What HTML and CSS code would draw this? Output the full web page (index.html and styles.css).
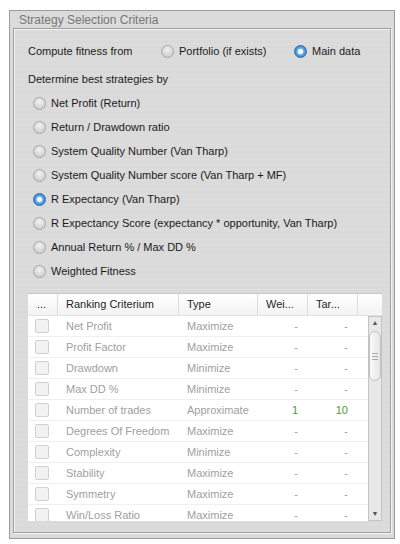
FILE: index.html
```html
<!DOCTYPE html>
<html lang="en">
<head>
    <meta charset="UTF-8">
    <title>Strategy Selection Criteria</title>
    <link rel="stylesheet" href="styles.css">
</head>
<body>

<div class="group">
    <div class="group-title">Strategy Selection Criteria</div>
    <div class="panel">
        <div class="row compute">
            <span class="compute-label">Compute fitness from</span>
            <label class="opt opt-portfolio"><span class="radio"></span>Portfolio (if exists)</label>
            <label class="opt opt-main"><span class="radio checked"></span>Main data</label>
        </div>
        <div class="row caption">Determine best strategies by</div>
        <div class="choices">
            <label class="row opt"><span class="radio"></span>Net Profit (Return)</label>
            <label class="row opt"><span class="radio"></span>Return / Drawdown ratio</label>
            <label class="row opt"><span class="radio"></span>System Quality Number (Van Tharp)</label>
            <label class="row opt"><span class="radio"></span>System Quality Number score (Van Tharp + MF)</label>
            <label class="row opt"><span class="radio checked"></span>R Expectancy (Van Tharp)</label>
            <label class="row opt"><span class="radio"></span>R Expectancy Score (expectancy * opportunity, Van Tharp)</label>
            <label class="row opt"><span class="radio"></span>Annual Return % / Max DD %</label>
            <label class="row opt"><span class="radio"></span>Weighted Fitness</label>
        </div>

        <div class="grid">
            <div class="grid-head">
                <div class="c c-chk">...</div>
                <div class="c c-name">Ranking Criterium</div>
                <div class="c c-type">Type</div>
                <div class="c c-w">Wei...</div>
                <div class="c c-t">Tar...</div>
                <div class="c c-pad"></div>
            </div>
            <div class="grid-body">
                <div class="rows">
                    <div class="grow"><div class="c c-chk"><span class="box"></span></div><div class="c c-name">Net Profit</div><div class="c c-type">Maximize</div><div class="c c-w">-</div><div class="c c-t">-</div></div>
                    <div class="grow"><div class="c c-chk"><span class="box"></span></div><div class="c c-name">Profit Factor</div><div class="c c-type">Maximize</div><div class="c c-w">-</div><div class="c c-t">-</div></div>
                    <div class="grow"><div class="c c-chk"><span class="box"></span></div><div class="c c-name">Drawdown</div><div class="c c-type">Minimize</div><div class="c c-w">-</div><div class="c c-t">-</div></div>
                    <div class="grow"><div class="c c-chk"><span class="box"></span></div><div class="c c-name">Max DD %</div><div class="c c-type">Minimize</div><div class="c c-w">-</div><div class="c c-t">-</div></div>
                    <div class="grow"><div class="c c-chk"><span class="box"></span></div><div class="c c-name">Number of trades</div><div class="c c-type">Approximate</div><div class="c c-w num">1</div><div class="c c-t num">10</div></div>
                    <div class="grow"><div class="c c-chk"><span class="box"></span></div><div class="c c-name">Degrees Of Freedom</div><div class="c c-type">Maximize</div><div class="c c-w">-</div><div class="c c-t">-</div></div>
                    <div class="grow"><div class="c c-chk"><span class="box"></span></div><div class="c c-name">Complexity</div><div class="c c-type">Minimize</div><div class="c c-w">-</div><div class="c c-t">-</div></div>
                    <div class="grow"><div class="c c-chk"><span class="box"></span></div><div class="c c-name">Stability</div><div class="c c-type">Maximize</div><div class="c c-w">-</div><div class="c c-t">-</div></div>
                    <div class="grow"><div class="c c-chk"><span class="box"></span></div><div class="c c-name">Symmetry</div><div class="c c-type">Maximize</div><div class="c c-w">-</div><div class="c c-t">-</div></div>
                    <div class="grow"><div class="c c-chk"><span class="box"></span></div><div class="c c-name">Win/Loss Ratio</div><div class="c c-type">Maximize</div><div class="c c-w">-</div><div class="c c-t">-</div></div>
                </div>
                <div class="scrollbar">
                    <div class="arrow">&#9650;</div>
                    <div class="track">
                        <div class="thumb"><span></span><span></span><span></span></div>
                    </div>
                    <div class="arrow">&#9660;</div>
                </div>
            </div>
        </div>
    </div>
</div>

</body>
</html>
```

FILE: styles.css
```css
body {
    margin: 0;
    background: #ffffff;
    font-family: "Liberation Sans", Arial, sans-serif;
    font-size: 11px;
    color: #1a1a1a;
}
.group {
    margin: 10px 5px 0 9px;
    width: 384px;
    height: 527px;
    border: 1px solid #9c9c9c;
    background: repeating-linear-gradient(180deg, #dcdcdc 0, #d8d8d8 2px, #dedede 3px, #d9d9d9 5px);
    display: flex;
    flex-direction: column;
}
.group-title {
    height: 17px;
    line-height: 18px;
    padding-left: 9px;
    font-size: 12px;
    color: #777;
}
.panel {
    flex: 1;
    margin: 0 3px 5px 3px;
    border: 1px solid #a0a0a0;
    box-shadow: inset 1px 1px 0 #f4f4f4, 1px 1px 0 #f4f4f4;
    padding: 10px 10px 0 14px;
    display: flex;
    flex-direction: column;
}
.row {
    height: 24px;
    display: flex;
    align-items: center;
}
.compute {
    margin-bottom: 4px;
}
.compute-label {
    width: 133px;
}
.opt {
    display: flex;
    align-items: center;
}
.opt-portfolio {
    width: 133px;
}
.choices .opt {
    padding-left: 5px;
}
.radio {
    width: 11px;
    height: 11px;
    border-radius: 50%;
    border: 1px solid #a6a6a6;
    background: radial-gradient(circle at 50% 35%, #f2f2f2 0, #d6d6d6 60%, #c4c4c4 100%);
    margin-right: 5px;
    flex: none;
}
.radio.checked {
    border-color: #2f6fae;
    background: radial-gradient(circle at 50% 50%, #ffffff 0, #f2f8ff 32%, #6fb1ea 40%, #2f83d0 75%, #1f68b0 100%);
}
.grid {
    margin-top: 10px;
    width: 354px;
    height: 227px;
    background: #fff;
    border-top: 1px solid #c8c8c8;
    display: flex;
    flex-direction: column;
}
.grid-head {
    height: 21px;
    display: flex;
    background: linear-gradient(#ffffff, #f3f3f3);
    border-bottom: 1px solid #e2e2e2;
    color: #1e1e1e;
}
.grid-head .c {
    border-right: 1px solid #dcdcdc;
    line-height: 21px;
}
.c {
    flex: none;
    padding-left: 8px;
    box-sizing: border-box;
    white-space: nowrap;
    overflow: hidden;
}
.c-chk { width: 30px; }
.c-name { width: 121px; }
.c-type { width: 79px; }
.c-w { width: 50px; }
.c-t { width: 50px; }
.grid-head .c-pad { width: 24px; border-right: none; }
.grid-head .c-chk { padding-left: 9px; }
.grid-body {
    flex: 1;
    display: flex;
    overflow: hidden;
}
.rows {
    width: 340px;
    overflow: hidden;
}
.grow {
    height: 20px;
    display: flex;
    align-items: center;
    border-bottom: 1px solid #f0f0f0;
    color: #a0a0a0;
}
.grow .c-w,
.grow .c-t {
    text-align: right;
    padding-right: 10px;
}
.grow .num {
    color: #4f9a3a;
}
.box {
    display: block;
    width: 12px;
    height: 12px;
    margin-left: -1px;
    border: 1px solid #d0d0d0;
    border-radius: 2px;
    background: #f2f2f2;
}
.scrollbar {
    width: 12px;
    border: 1px solid #c4c4c4;
    background: #e8e8e8;
    display: flex;
    flex-direction: column;
}
.arrow {
    height: 12px;
    font-size: 7px;
    line-height: 12px;
    text-align: center;
    color: #555;
}
.track {
    flex: 1;
}
.thumb {
    height: 48px;
    margin-top: 2px;
    border: 1px solid #c0c0c0;
    border-radius: 6px;
    background: linear-gradient(90deg, #fafafa, #e6e6e6);
    display: flex;
    flex-direction: column;
    justify-content: center;
    align-items: center;
    gap: 2px;
}
.thumb span {
    display: block;
    width: 6px;
    height: 1px;
    background: #a8a8a8;
}
```
